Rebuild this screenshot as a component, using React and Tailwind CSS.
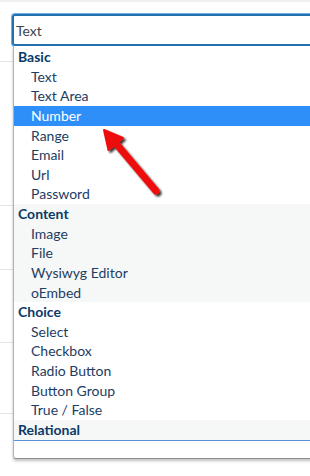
import React from "react";

const groups = [
  { name: "Basic", items: ["Text", "Text Area", "Number", "Range", "Email", "Url", "Password"] },
  { name: "Content", items: ["Image", "File", "Wysiwyg Editor", "oEmbed"] },
  { name: "Choice", items: ["Select", "Checkbox", "Radio Button", "Button Group", "True / False"] },
  { name: "Relational", items: [] },
];

export default function App() {
  return (
    <div className="relative w-[310px] h-[476px] overflow-hidden bg-white" style={{ fontFamily: "Lato, 'Liberation Sans', sans-serif" }}>
      {/* background table rows */}
      <div className="flex flex-col">
        <div className="h-[2px] bg-[#f0f0f1]" />
        <div className="h-[60px] border-b border-[#e4e4e4]" />
        <div className="h-[144px] border-b border-[#e4e4e4]" />
        <div className="h-[64px] border-b border-[#e4e4e4]" />
        <div className="h-[73px] border-b border-[#e4e4e4]" />
        <div className="h-[71px] border-b border-[#e4e4e4]" />
      </div>

      {/* open select */}
      <div className="absolute left-[12px] top-[14px] w-[320px]">
        <div className="h-[32px] rounded-[3px] border-2 border-[#2271b1] shadow-[0_0_0_1px_#72aee6] flex items-center pl-[2px] text-[14px] text-[#3c434a]">
          Text
        </div>
        <div className="ml-px pt-px border-l border-[#9fb4d3] border-b border-b-[#8c8f94] shadow-[0_2px_3px_rgba(0,0,0,0.25)] rounded-bl-[3px] bg-white pb-[17px]">
          {groups.map((g, gi) => (
            <div key={g.name} className={gi % 2 === 1 ? "bg-[#f6f7f7]" : "bg-white"}>
              <div className="h-[19.63px] leading-[19.63px] pl-[4px] text-[14px] font-bold text-[#0a3a66]">{g.name}</div>
              {g.items.map((it) => (
                <div
                  key={it}
                  className={
                    it === "Number"
                      ? "h-[19.63px] leading-[19.63px] pl-[17px] text-[14px] bg-[#2f8ff9] text-white"
                      : "h-[19.63px] leading-[19.63px] pl-[17px] text-[14px] text-[#1d3d63]"
                  }
                >
                  {it}
                </div>
              ))}
            </div>
          ))}
          <div className="h-px bg-[#5b8fd6]" />
        </div>
      </div>

      {/* red arrow annotation */}
      <svg className="absolute left-0 top-0" width="310" height="476" viewBox="0 0 310 476">
        <defs>
          <filter id="sh" x="-20%" y="-20%" width="140%" height="140%">
            <feGaussianBlur in="SourceAlpha" stdDeviation="1.2" />
            <feOffset dx="2" dy="2" result="b" />
            <feComponentTransfer><feFuncA type="linear" slope="0.8" /></feComponentTransfer>
            <feMerge>
              <feMergeNode />
              <feMergeNode in="SourceGraphic" />
            </feMerge>
          </filter>
        </defs>
        <g filter="url(#sh)">
          <line x1="156" y1="191" x2="113" y2="140" stroke="#ee0f0f" strokeWidth="7" strokeLinecap="round" />
          <polygon points="104,130 123,138 108.5,150" fill="#ee0f0f" stroke="#ee0f0f" strokeWidth="2" strokeLinejoin="round" />
        </g>
      </svg>
    </div>
  );
}
